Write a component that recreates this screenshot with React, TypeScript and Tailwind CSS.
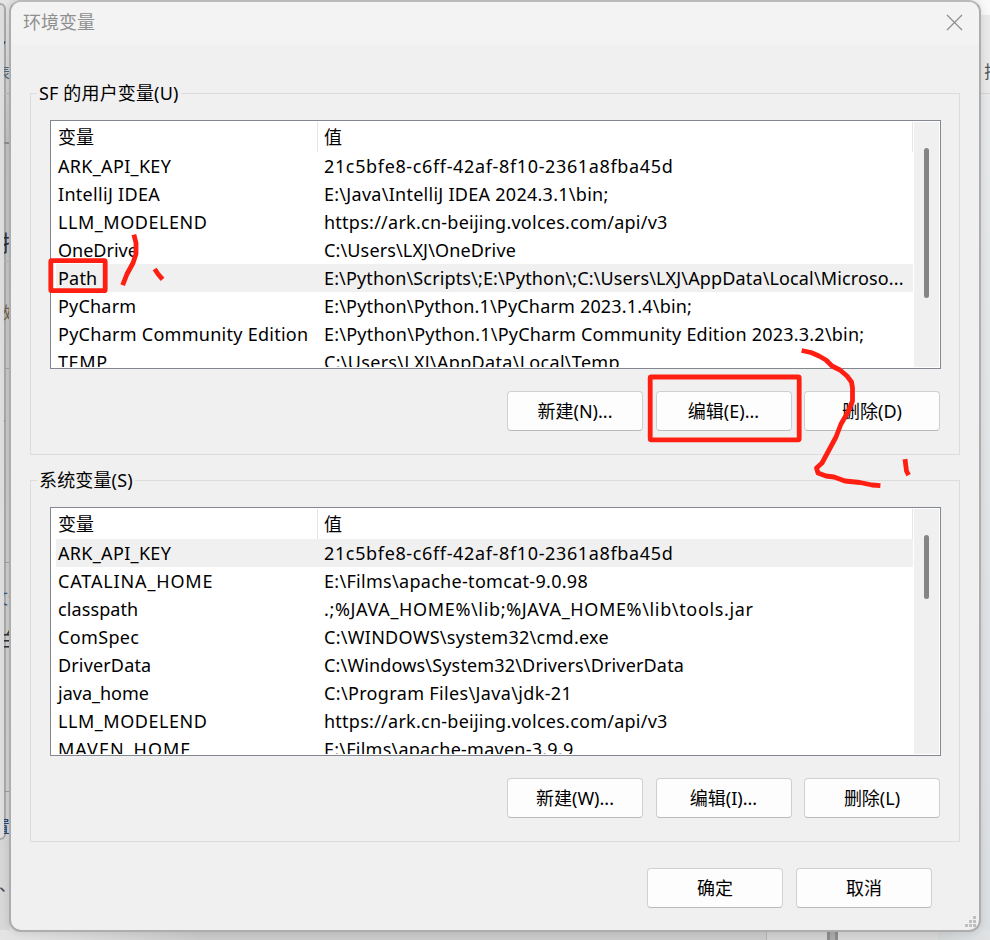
interface EnvVar {
  name: string;
  value: string;
  nameClass?: string;
  valueClass?: string;
}

const userVars: EnvVar[] = [
  { name: 'ARK_API_KEY', value: '21c5bfe8-c6ff-42af-8f10-2361a8fba45d', nameClass: 'tracking-[0.32px]', valueClass: 'tracking-[0.64px]' },
  { name: 'IntelliJ IDEA', value: 'E:\\Java\\IntelliJ IDEA 2024.3.1\\bin;', nameClass: 'tracking-[0.3px]', valueClass: 'tracking-[0.27px]' },
  { name: 'LLM_MODELEND', value: 'https://ark.cn-beijing.volces.com/api/v3', nameClass: 'tracking-[0.53px]', valueClass: 'tracking-[0.25px]' },
  { name: 'OneDrive', value: 'C:\\Users\\LXJ\\OneDrive', valueClass: 'tracking-[0.14px]' },
  { name: 'Path', value: 'E:\\Python\\Scripts\\;E:\\Python\\;C:\\Users\\LXJ\\AppData\\Local\\Microso...', nameClass: 'tracking-[0.2px]', valueClass: 'tracking-[0.14px]' },
  { name: 'PyCharm', value: 'E:\\Python\\Python.1\\PyCharm 2023.1.4\\bin;', nameClass: 'tracking-[0.2px]', valueClass: 'tracking-[0.18px]' },
  { name: 'PyCharm Community Edition', value: 'E:\\Python\\Python.1\\PyCharm Community Edition 2023.3.2\\bin;', nameClass: 'tracking-[0.27px]', valueClass: 'tracking-[0.22px]' },
  { name: 'TEMP', value: 'C:\\Users\\LXJ\\AppData\\Local\\Temp', nameClass: 'tracking-[0.6px]', valueClass: 'tracking-[0.3px]' },
];

const systemVars: EnvVar[] = [
  { name: 'ARK_API_KEY', value: '21c5bfe8-c6ff-42af-8f10-2361a8fba45d', nameClass: 'tracking-[0.32px]', valueClass: 'tracking-[0.64px]' },
  { name: 'CATALINA_HOME', value: 'E:\\Films\\apache-tomcat-9.0.98', nameClass: 'tracking-[0.85px]', valueClass: 'tracking-[0.3px]' },
  { name: 'classpath', value: '.;%JAVA_HOME%\\lib;%JAVA_HOME%\\lib\\tools.jar', nameClass: 'tracking-[0.1px]', valueClass: 'tracking-[0.65px]' },
  { name: 'ComSpec', value: 'C:\\WINDOWS\\system32\\cmd.exe', nameClass: 'tracking-[0.35px]', valueClass: 'tracking-[0.28px]' },
  { name: 'DriverData', value: 'C:\\Windows\\System32\\Drivers\\DriverData', nameClass: 'tracking-[0.15px]', valueClass: 'tracking-[0.16px]' },
  { name: 'java_home', value: 'C:\\Program Files\\Java\\jdk-21', valueClass: 'tracking-[0.35px]' },
  { name: 'LLM_MODELEND', value: 'https://ark.cn-beijing.volces.com/api/v3', nameClass: 'tracking-[0.53px]', valueClass: 'tracking-[0.25px]' },
  { name: 'MAVEN_HOME', value: 'E:\\Films\\apache-maven-3.9.9', nameClass: 'tracking-[1px]', valueClass: 'tracking-[0.24px]' },
];

const Button = ({ label }: { label: string }) => (
  <button className="h-10 w-[136px] rounded-[4px] border border-[#d0d0d0] border-b-[#bababa] bg-[#fdfdfd] text-center leading-9">
    {label}
  </button>
);

interface VarGroupProps {
  title: string;
  vars: EnvVar[];
  selected: string;
  thumb: string;
  buttons: string[];
}

const VarGroup = ({ title, vars, selected, thumb, buttons }: VarGroupProps) => (
  <section className="h-[362px] w-[930px] border border-[#dcdcdc] px-[19px]">
    <h2 className="-mt-[15px] mb-[13px] -ml-[13px] w-fit bg-[#f0f0f0] px-0.5 leading-7 tracking-[0.15px]">{title}</h2>

    <div className="flex h-[249px] w-[891px] justify-between overflow-hidden border border-[#828790] bg-white p-px">
      <div className="h-[245px] w-[861px] overflow-hidden">
        <div className="flex h-[30px] leading-[31px]">
          <div className="w-[266px] border-r border-[#e5e5e5] pl-1.5">变量</div>
          <div className="flex-1 border-r border-[#e5e5e5] pl-1.5">值</div>
        </div>
        {vars.map((v) => (
          <div
            key={v.name}
            className={`ml-1 flex h-7 whitespace-nowrap leading-7 ${v.name === selected ? 'bg-[#f0f0f0]' : ''}`}
          >
            <div className={`w-[266px] pl-0.5 ${v.nameClass ?? ''}`}>{v.name}</div>
            <div className={`pl-0.5 ${v.valueClass ?? ''}`}>{v.value}</div>
          </div>
        ))}
      </div>
      <div className="flex w-[25px] justify-center bg-[#f0f0f0] pt-[26px]">
        <div className={`w-[5px] rounded-full bg-[#858585] ${thumb}`} />
      </div>
    </div>

    <div className="mt-[22px] flex justify-end gap-[12.5px]">
      {buttons.map((b) => (
        <Button key={b} label={b} />
      ))}
    </div>
  </section>
);

// Slivers of the windows that stay visible around the dialog
const Backdrop = () => (
  <div className="absolute inset-0 flex flex-col overflow-hidden bg-[#e2e2e2]">
    <div className="flex h-[930px] justify-between">
      <div className="flex w-2.5 overflow-hidden bg-gradient-to-b from-[#e6e6e6] via-[#c4c4c4] via-15% to-[#d8d8d8]">
        <div className="w-1.5 shrink-0 pt-[3px] text-[17px] leading-6 text-[#3a4450]">
          <div className="h-[837px] rounded-r-md border-y-2 border-r-2 border-[#a9a9a9] bg-[#dedede]" />
          <div className="-ml-px pt-[33px]">、</div>
        </div>

        <div className="-ml-0.5 flex w-1.5 shrink-0 flex-col overflow-hidden pt-[31px] text-[17px] leading-6 whitespace-nowrap text-[#2c3038]">
          <span className="-ml-[3px] text-[9px] leading-6">▾</span>
          <span className="mt-[5px] -ml-[9px] text-[15px] leading-6 text-[#52687d]">表</span>
          <div className="mt-[9px] h-px bg-[#b5b5b5]" />
          <div className="mt-12 h-0.5 bg-[#8f8f8f]" />
          <span className="mt-[86px] -ml-[3px] text-[22px] leading-6">排</span>
          <div className="mt-[7px] h-px bg-[#b5b5b5]" />
          <span className="mt-[39px] -ml-[9px] text-[#74604c]">数</span>
          <div className="mt-[43px] h-px bg-[#a5a5a5]" />
          <span className="mt-[43px] -ml-[5px] text-[15px] leading-6 text-[#315a8b]">/</span>
          <div className="mt-[126px] h-px bg-[#a0a0a0]" />
          <span className="mt-[23px] -ml-[13px] text-[#3d5878]">
            文<span className="text-[#a87545]">件</span>
          </span>
          <span className="mt-[18px] -ml-[9px] text-[20px] leading-6">兰</span>
          <div className="mt-[139px] h-px bg-[#9c9c9c]" />
          <span className="mt-[23px] -ml-[11px] text-[#26456b]">置</span>
        </div>
      </div>

      <div className="flex w-5 flex-col overflow-hidden bg-gradient-to-b from-[#e8eaeb] to-[#dcdfe2]">
        <div className="h-[15px] bg-[#f9f9f9]" />
        <div className="h-[79px] border-b border-[#d4d4d4] bg-[#e9e9e9] pt-[45px] pl-3.5 text-[17px] leading-6 text-[#4d5560]">
          排
        </div>
      </div>
    </div>

    <div className="flex flex-1">
      <div className="w-[200px] bg-gradient-to-r from-[#e4e4e4] to-[#c9c9c9]" />
      <div className="w-[566px] bg-[#c9c9c9]" />
      <div className="w-[61px] border-l border-[#b3b3b3] bg-[#d0d0d0]" />
      <div className="w-[11px] border-x-[3px] border-[#8c8c8c] bg-[#a9a9a9]" />
      <div className="w-[100px] bg-[#d6d6d6]" />
      <div className="flex-1 bg-gradient-to-r from-[#cfd3d4] to-[#e0e2e4]" />
    </div>
  </div>
);

const ResizeGrip = () => (
  <svg className="mt-2 mr-[3px] ml-auto" width="11" height="11" viewBox="0 0 11 11" fill="#bfbfbf">
    <path d="M8 0h3v3h-3zM4 4h3v3h-3zM8 4h3v3h-3zM0 8h3v3h-3zM4 8h3v3h-3zM8 8h3v3h-3z" />
  </svg>
);

// Red pen marks numbering the two steps
const Marks = () => (
  <svg
    className="pointer-events-none absolute inset-0"
    width="990"
    height="940"
    viewBox="0 0 990 940"
    fill="none"
    stroke="#ff1f12"
    strokeWidth="4.8"
    strokeLinecap="square"
    strokeLinejoin="round"
  >
    <rect x="50.8" y="260.7" width="54.4" height="30" rx="1" />
    <rect x="650.2" y="377" width="149" height="62.8" rx="1" />
    <path d="M134.5 237L136 243V254L133 263L127 274L123.5 283" />
    <path d="M156 271L158 274L161 277.5" />
    <path d="M804 351L811 352.5L819 356L826 360L832 366L840 370L847 376L851.5 382L852.5 388V401L848 412L841 424L836 437L829 450L822 463L816.5 468L818 473L826 476L834 477L845 481L860 482.5L872 485L878 485.5" />
    <path d="M905.3 461.5L906.5 471L907.5 473" />
  </svg>
);

export default function App() {
  return (
    <div className="relative h-[940px] w-[990px] overflow-hidden pl-[9px] font-['Noto_Sans','Noto_Sans_CJK_SC',sans-serif] text-[18px] text-black">
      <Backdrop />
      <main className="relative h-[932px] w-[972px] rounded-[12px] border-2 border-[#adadad] border-t-[#bababa] bg-[#f0f0f0] shadow-[0_0_8px_rgba(0,0,0,0.12)]">
        <header className="flex h-[43px] items-center justify-between rounded-t-[10px] bg-[#f3f3f3] pr-4 pb-0.5 pl-3 text-[#8f8f8f]">
          <span>环境变量</span>
          <svg width="17" height="17" viewBox="0 0 17 17" fill="none" stroke="#8f8f8f" strokeWidth="1.3">
            <path d="M1 1l15 15M16 1L1 16" />
          </svg>
        </header>
        <div className="flex flex-col gap-[25px] pt-12 pl-[19px]">
          <VarGroup
            title="SF 的用户变量(U)"
            vars={userVars}
            selected="Path"
            thumb="h-[150px]"
            buttons={['新建(N)...', '编辑(E)...', '删除(D)']}
          />
          <VarGroup
            title="系统变量(S)"
            vars={systemVars}
            selected="ARK_API_KEY"
            thumb="h-16"
            buttons={['新建(W)...', '编辑(I)...', '删除(L)']}
          />
        </div>
        <footer className="mt-[26px] flex justify-end gap-[13px] pr-[47px]">
          <Button label="确定" />
          <Button label="取消" />
        </footer>
        <ResizeGrip />
      </main>
      <Marks />
    </div>
  );
}
